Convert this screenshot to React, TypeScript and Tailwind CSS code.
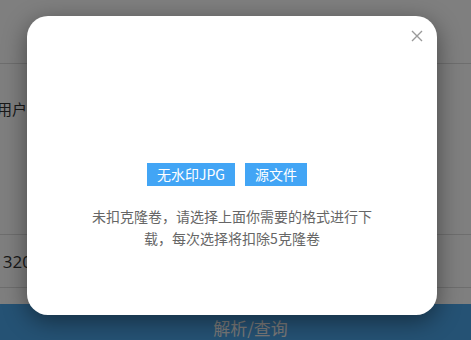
import React from "react";

export default function App() {
  const font = { fontFamily: '"Noto Sans CJK SC", "Noto Sans", sans-serif' };
  return (
    <div className="relative w-[471px] h-[340px] overflow-hidden bg-white" style={font}>
      {/* underlying page */}
      <div className="flex flex-col h-full">
        <div className="h-[65px] border-b border-[#dddddd]" />
        <div className="h-[174px] border-b border-[#dddddd] pt-[34px]">
          <span className="block -ml-[3px] text-[15px] leading-[22px] text-[#333333]">用户名：</span>
        </div>
        <div className="h-[54px] border-b border-[#dddddd] flex items-center">
          <span className="-ml-[7px] text-[17px] text-[#333333]" style={{ fontFamily: '"Open Sans", sans-serif' }}>
            13200000000
          </span>
        </div>
        <div className="h-[16px]" />
        <div className="flex-1 bg-[#4aa4e8] flex justify-center pt-[12px]">
          <span className="text-[17px] leading-[24px] text-[#f2f2f2] ml-[30px]">解析/查询</span>
        </div>
      </div>

      {/* overlay */}
      <div className="absolute inset-0 bg-black/50" />

      {/* modal */}
      <div className="absolute left-[27px] top-[16px] w-[410px] h-[299px] bg-white rounded-[21px] shadow-[0_6px_24px_rgba(0,0,0,0.45)] flex flex-col">
        <button className="absolute right-[14px] top-[14px] w-[12px] h-[12px] flex items-center justify-center">
          <svg width="12" height="12" viewBox="0 0 12 12">
            <path d="M1 1L11 11M11 1L1 11" stroke="#9a9a9a" strokeWidth="1.4" />
          </svg>
        </button>
        <div className="pt-[147px] text-center leading-none">
          <span className="inline-block bg-[#42a5f5] text-white text-[14px] leading-[23px] h-[23px] px-[10px] mr-[10px] align-top">
            无水印JPG
          </span>
          <span className="inline-block bg-[#42a5f5] text-white text-[14px] leading-[23px] h-[23px] px-[10px] mr-[10px] align-top">
            源文件
          </span>
        </div>
        <p className="mt-[19px] px-[60px] text-center text-[14px] leading-[22px] text-[#666666]">
          未扣克隆卷，请选择上面你需要的格式进行下载，每次选择将扣除5克隆卷
        </p>
      </div>
    </div>
  );
}
